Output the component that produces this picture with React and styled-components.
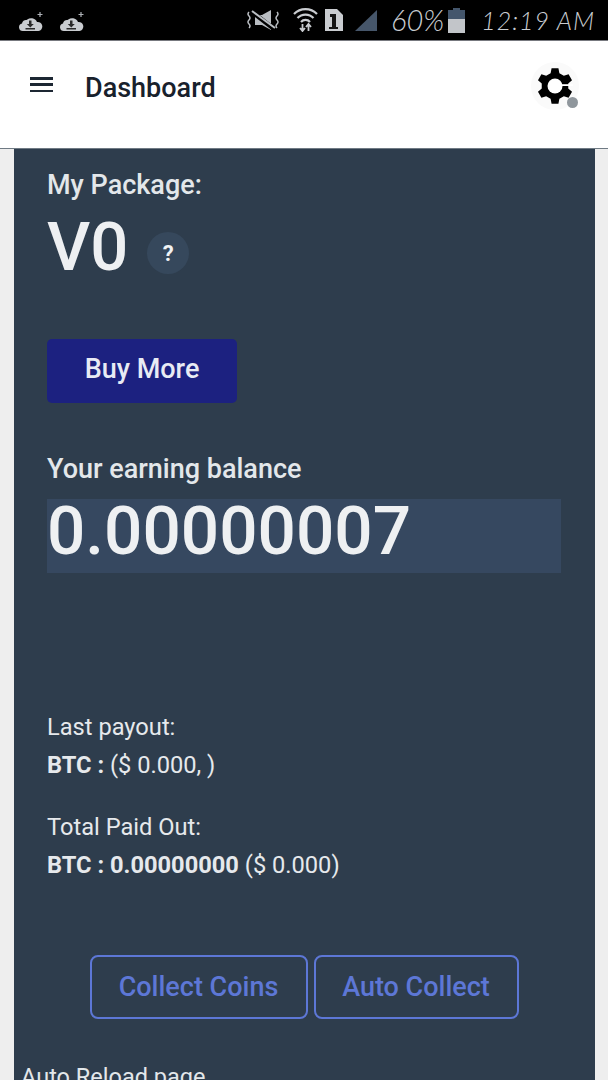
import React from "react";
import styled, { createGlobalStyle } from "styled-components";

const Global = createGlobalStyle`
  html, body { margin: 0; padding: 0; background: #eeeeee; }
  body { font-family: Roboto, "Liberation Sans", sans-serif; }
  #root { width: 608px; height: 1080px; overflow: hidden; }
`;

const Page = styled.div`
  width: 608px;
  height: 1080px;
  overflow: hidden;
  display: flex;
  flex-direction: column;
  background: #eeeeee;
`;

const StatusBar = styled.div`
  height: 40px;
  flex: none;
  background: #000;
  display: flex;
  align-items: center;
  padding: 0 13px 0 19px;
  border-bottom: 1px solid #77797f;
  color: #c9ccd0;
`;

const StatusLeft = styled.div`
  display: flex;
  gap: 15px;
  align-items: center;
`;

const StatusRight = styled.div`
  margin-left: auto;
  display: flex;
  align-items: center;
`;

const StatusText = styled.span`
  font-family: Lato, "DejaVu Sans", sans-serif;
  font-weight: 300;
  font-style: italic;
  font-size: ${(p) => p.$size}px;
  letter-spacing: ${(p) => p.$spacing}px;
  margin-left: ${(p) => p.$left}px;
  color: #c9ccd0;
  white-space: nowrap;
  line-height: 40px;
`;

const IconSlot = styled.span`
  display: flex;
  margin-left: ${(p) => p.$left || 0}px;
`;

const Header = styled.header`
  height: 107px;
  flex: none;
  background: #fff;
  border-bottom: 1px solid #6f7a84;
  display: flex;
  align-items: flex-start;
  padding: 0 29px 0 30px;
`;

const Menu = styled.div`
  margin-top: 36px;
  width: 23px;
  height: 15px;
  display: flex;
  flex-direction: column;
  justify-content: space-between;
`;

const MenuBar = styled.span`
  display: block;
  height: 2.5px;
  background: #1d2733;
`;

const Title = styled.h1`
  margin: 29px 0 0 32px;
  font-size: 27px;
  line-height: 36px;
  font-weight: 500;
  color: #18212c;
`;

const Gear = styled.div`
  margin: 21px 0 0 auto;
  width: 48px;
  height: 48px;
  position: relative;
  display: flex;
  align-items: center;
  justify-content: center;
  border-radius: 50%;
  background: #fafafa;
`;

const Dot = styled.span`
  position: absolute;
  right: 1px;
  bottom: 2px;
  width: 11px;
  height: 11px;
  border-radius: 50%;
  background: #8f969c;
`;

const Panel = styled.main`
  flex: 1;
  margin: 0 13px 0 14px;
  background: #2e3d4d;
  color: #e8ebee;
  min-height: 0;
`;

const Inner = styled.div`
  padding: 19px 34px 0 33px;
`;

const Label = styled.div`
  font-size: 27px;
  line-height: 34px;
  font-weight: 500;
  color: #e3e7ea;
`;

const PackageRow = styled.div`
  display: flex;
  align-items: center;
  margin-top: 9px;
  height: 72px;
`;

const PackageName = styled.div`
  font-size: 67px;
  line-height: 72px;
  font-weight: 500;
  color: #eef0f2;
`;

const Help = styled.span`
  width: 42px;
  height: 42px;
  margin: 12px 0 0 19px;
  border-radius: 50%;
  background: #36485c;
  color: #f1f3f5;
  font-size: 22px;
  font-weight: 700;
  display: flex;
  align-items: center;
  justify-content: center;
`;

const BuyButton = styled.button`
  display: block;
  margin-top: 56px;
  width: 190px;
  height: 64px;
  border: 0;
  border-radius: 5px;
  background: #1c2180;
  color: #e8ebf4;
  font-family: inherit;
  font-size: 27px;
  font-weight: 500;
  padding: 0 0 5px;
`;

const BalanceLabel = styled(Label)`
  margin-top: 49px;
`;

const Balance = styled.div`
  margin: 13px 0 0;
  height: 74px;
  background: #364860;
  font-size: 67.5px;
  line-height: 64px;
  font-weight: 500;
  color: #eef0f2;
`;

const Info = styled.div`
  font-size: 23.65px;
  line-height: 37.5px;
  color: #e6e9ec;
  margin-top: ${(p) => p.$top}px;
`;

const Strong = styled.b`
  font-weight: 700;
`;

const Actions = styled.div`
  margin-top: 71px;
  display: flex;
  justify-content: center;
  gap: 6px;
`;

const Outline = styled.button`
  height: 64px;
  width: ${(p) => p.$width}px;
  background: transparent;
  border: 2px solid #5d77d6;
  border-radius: 8px;
  color: #5d77d6;
  font-family: inherit;
  font-size: 27px;
  font-weight: 500;
  padding: 0;
`;

const Reload = styled.div`
  margin: 43px 0 0 -26px;
  font-size: 23.5px;
  line-height: 30px;
  color: #e3e7ea;
  white-space: nowrap;
`;

const CloudIcon = () => (
  <svg width="26" height="22" viewBox="0 0 26 22" style={{ marginTop: 3 }}>
    <path d="M4 20a3.800 3.800 0 0 1-1-7.500A4 4 0 0 1 7.500 9 6.500 6.500 0 0 1 18 11a4.500 4.500 0 0 1 1.500 9Z" fill="#c9ccd0" />
    <path d="M10 9.500h2.500v3.500h2.300l-3.500 3.500-3.500-3.500H10ZM6.500 17h9.500v1.500H6.500Z" fill="#2a2a2a" />
    <path d="M21 1v5M18.500 3.500h5" stroke="#aeb2b7" strokeWidth="1.2" />
  </svg>
);

const MuteIcon = () => (
  <svg width="33" height="22" viewBox="0 0 33 22" fill="none" stroke="#b9bdc2">
    <path d="M8 6h7l9-5v20l-9-5H8Z" fill="#b9bdc2" stroke="none" />
    <path d="M4 2l23 18" stroke="#000" strokeWidth="4.500" />
    <path d="M5 2l23 17" strokeWidth="2" />
    <path d="M2 3q-2 2 0 4t0 4 0 4 0 4M30 3q2 2 0 4t0 4 0 4 0 4" strokeWidth="1.500" />
  </svg>
);

const WifiIcon = () => (
  <svg width="25" height="24" viewBox="0 0 25 24" fill="none" stroke="#c9ccd0" strokeWidth="2.200">
    <path d="M1 6a16 16 0 0 1 23 0M4.500 10a11 11 0 0 1 16 0M8 14a6 6 0 0 1 9 0" />
    <path d="M9.500 23v-7M7 20l2.500 3 2.500-3M15.500 16v7M13 19l2.500-3 2.500 3" strokeWidth="1.800" />
  </svg>
);

const SimIcon = () => (
  <svg width="19" height="22" viewBox="0 0 19 22">
    <path d="M1 0h12l6 6v16H1Z" fill="#c9ccd0" />
    <path d="M6 5h6v13h2v2H5v-2h3V8H6Z" fill="#141414" />
  </svg>
);

const SignalIcon = () => (
  <svg width="22" height="21" viewBox="0 0 22 21">
    <path d="M22 0v21H0Z" fill="#46566a" />
  </svg>
);

const BatteryIcon = () => (
  <svg width="17" height="25" viewBox="0 0 17 25">
    <path d="M5 0h7v2h5v23H0V2h5Z" fill="#44566c" />
    <path d="M0 11h17v14H0Z" fill="#c2c5c9" />
  </svg>
);

const gearPath = (() => {
  const cx = 18;
  const cy = 18;
  const pts = [];
  for (let k = 0; k < 6; k += 1) {
    const c = -90 + 60 * k;
    [[-19, 13.5], [-11, 18], [11, 18], [19, 13.5]].forEach(([da, r]) => {
      const a = ((c + da) * Math.PI) / 180;
      pts.push(`${(cx + r * Math.cos(a)).toFixed(2)} ${(cy + r * Math.sin(a)).toFixed(2)}`);
    });
  }
  return `M${pts.join("L")}Z`;
})();

const GearIcon = () => (
  <svg width="36" height="36" viewBox="0 0 36 36">
    <path d={gearPath} fill="#000" />
    <circle cx="18" cy="18" r="7.500" fill="#fff" />
    <path d="M23 16.200h13v1.800H23Z" fill="#fff" />
  </svg>
);

export default function App() {
  return (
    <Page>
      <Global />
      <StatusBar>
        <StatusLeft>
          <CloudIcon />
          <CloudIcon />
        </StatusLeft>
        <StatusRight>
          <MuteIcon />
          <IconSlot $left={13}><WifiIcon /></IconSlot>
          <IconSlot $left={6}><SimIcon /></IconSlot>
          <IconSlot $left={12}><SignalIcon /></IconSlot>
          <StatusText $size={29} $spacing={0} $left={14}>60%</StatusText>
          <IconSlot $left={4}><BatteryIcon /></IconSlot>
          <StatusText $size={25} $spacing={1} $left={16}>12:19 AM</StatusText>
        </StatusRight>
      </StatusBar>
      <Header>
        <Menu>
          <MenuBar />
          <MenuBar />
          <MenuBar />
        </Menu>
        <Title>Dashboard</Title>
        <Gear>
          <GearIcon />
          <Dot />
        </Gear>
      </Header>
      <Panel>
        <Inner>
          <Label>My Package:</Label>
          <PackageRow>
            <PackageName>V0</PackageName>
            <Help>?</Help>
          </PackageRow>
          <BuyButton>Buy More</BuyButton>
          <BalanceLabel>Your earning balance</BalanceLabel>
          <Balance>0.00000007</Balance>
          <Info $top={136}>
            Last payout:
            <br />
            <Strong>BTC :</Strong> ($ 0.000, )
          </Info>
          <Info $top={25}>
            Total Paid Out:
            <br />
            <Strong>BTC : 0.00000000</Strong> ($ 0.000)
          </Info>
          <Actions>
            <Outline $width={218}>Collect Coins</Outline>
            <Outline $width={205}>Auto Collect</Outline>
          </Actions>
          <Reload>Auto Reload page</Reload>
        </Inner>
      </Panel>
    </Page>
  );
}
